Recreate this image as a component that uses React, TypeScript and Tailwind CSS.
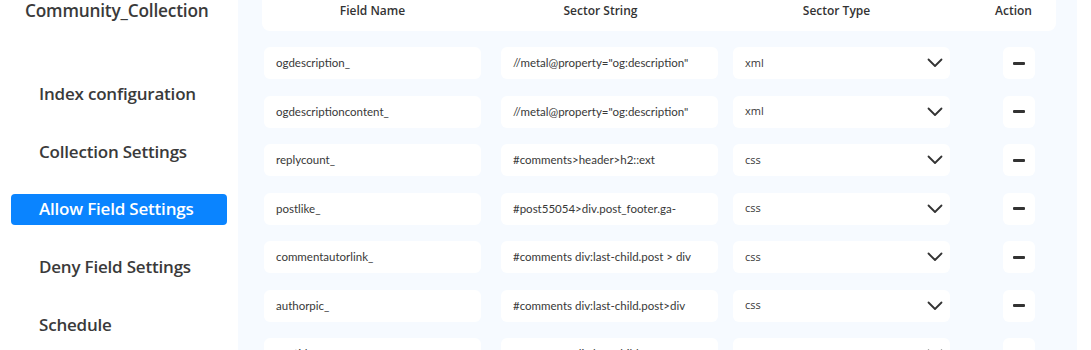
const MENU = [
  'Index configuration',
  'Collection Settings',
  'Allow Field Settings',
  'Deny Field Settings',
  'Schedule',
]

const ROWS = [
  { name: 'ogdescription_', sector: '//metal@property="og:description"', type: 'xml' },
  { name: 'ogdescriptioncontent_', sector: '//metal@property="og:description"', type: 'xml' },
  { name: 'replycount_', sector: '#comments>header>h2::ext', type: 'css' },
  { name: 'postlike_', sector: '#post55054>div.post_footer.ga-', type: 'css' },
  { name: 'commentautorlink_', sector: '#comments div:last-child.post > div', type: 'css' },
  { name: 'authorpic_', sector: '#comments div:last-child.post>div', type: 'css' },
  { name: 'postid_', sector: '#comments div:last-child.post', type: 'css' },
]

function Chevron() {
  return (
    <svg width="16" height="10" viewBox="0 0 16 10" fill="none" stroke="#333" strokeWidth="1.8" strokeLinecap="round" strokeLinejoin="round">
      <path d="M1.5 1.5 8 8l6.5-6.5" />
    </svg>
  )
}

export default function App() {
  return (
    <div className="flex h-[350px] w-[1091px] overflow-hidden bg-white font-['Open_Sans','Liberation_Sans',sans-serif] text-[#333]">
      {/* Sidebar */}
      <aside className="w-[238px] shrink-0 bg-white">
        <div className="pl-[25px] text-[17.3px] font-semibold leading-[21px] tracking-[-0.2px] text-[#3a3a3a]">
          Community_Collection
        </div>
        <nav className="mt-[57px] flex flex-col gap-[26.8px] px-[11px]">
          {MENU.map((m) => (
            <div
              key={m}
              className={`flex h-[31px] items-center rounded-[4px] pl-[28px] text-[17px] font-semibold tracking-[-0.2px] ${
                m === 'Allow Field Settings' ? 'bg-[#0a84ff] text-white' : 'text-[#3a3a3a]'
              }`}
            >
              {m}
            </div>
          ))}
        </nav>
      </aside>

      {/* Main */}
      <main className="w-[839px] shrink-0 bg-[#f6faff] pl-[24px]">
        <div className="mt-[-17px] flex h-[48px] w-[794px] items-end rounded-[8px] bg-white pb-[11px] text-[12px] font-semibold text-[#333]">
          <div className="ml-[2px] w-[217px] text-center">Field Name</div>
          <div className="ml-[11px] w-[217px] text-center">Sector String</div>
          <div className="ml-[19px] w-[217px] text-center">Sector Type</div>
          <div className="ml-[50px] w-[32px] text-center">Action</div>
        </div>

        <div className="mt-[16px] flex flex-col gap-[16.5px] pl-[2px] font-['Lato','Liberation_Sans',sans-serif] text-[11.5px] text-[#383838]">
          {ROWS.map((r) => (
            <div key={r.name} className="flex h-[32px] items-center">
              <div className="flex h-full w-[217px] items-center rounded-[6px] bg-white pl-[12px]">
                {r.name}
              </div>
              <div className="ml-[20px] flex h-full w-[217px] items-center rounded-[6px] bg-white pl-[12px]">
                {r.sector}
              </div>
              <div className="ml-[15px] flex h-full w-[217px] items-center justify-between rounded-[6px] bg-white pl-[12px] pr-[7px] font-['Open_Sans','Liberation_Sans',sans-serif] text-[11px]">
                {r.type}
                <Chevron />
              </div>
              <div className="ml-[53px] flex h-full w-[32px] items-center justify-center rounded-[6px] bg-white">
                <span className="h-[3px] w-[12px] rounded-[1px] bg-[#333]" />
              </div>
            </div>
          ))}
        </div>
      </main>
    </div>
  )
}
